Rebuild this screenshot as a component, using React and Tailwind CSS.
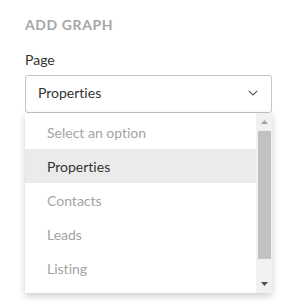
export default function App() {
  const options = [
    { label: 'Select an option', active: false },
    { label: 'Properties', active: true },
    { label: 'Contacts', active: false },
    { label: 'Leads', active: false },
    { label: 'Listing', active: false },
  ]

  return (
    <div className="min-h-[303px] bg-white pl-[25px] pr-[20px] pt-[15px] font-['Lato','Open_Sans',sans-serif] [font-variant-ligatures:none]">
      <h2 className="text-[14px] leading-[20px] font-bold uppercase text-[#a6a6a6] tracking-[0.6px]">Add Graph</h2>

      <label className="block mt-[15px] text-[14px] leading-[20px] text-[#333]">Page</label>

      <div className="relative mt-[5px]">
        <button className="flex h-[38px] w-full items-center justify-between rounded-[3px] border border-[#c4c4c4] bg-white pl-[12px] pr-[13px] text-left">
          <span className="text-[14px] leading-[20px] text-[#333] -mt-[3px]">Properties</span>
          <svg width="10" height="6" viewBox="0 0 10 6" className="-mt-[3px]">
            <path d="M0.8 0.8 L5 5 L9.2 0.8" fill="none" stroke="#555" strokeWidth="1.1" />
          </svg>
        </button>

        <div className="absolute left-0 right-0 top-full flex h-[180px] overflow-hidden bg-white shadow-[0_3px_7px_rgba(0,0,0,0.2)]">
          <ul className="flex-1 pt-[2px]">
            {options.map((o) => (
              <li
                key={o.label}
                className={
                  o.active
                    ? 'h-[34px] flex items-center pl-[22px] text-[14px] text-[#333] bg-[#ebebeb]'
                    : 'h-[34px] flex items-center pl-[22px] text-[14px] text-[#a3a3a3]'
                }
              >
                {o.label}
              </li>
            ))}
          </ul>

          <div className="flex w-[16px] flex-col items-center bg-[#f1f1f1]">
            <div className="flex h-[18px] items-center justify-center">
              <svg width="7" height="4" viewBox="0 0 7 4">
                <path d="M0 4 L3.5 0 L7 4 Z" fill="#a3a3a3" />
              </svg>
            </div>
            <div className="h-[128px] w-[13px] bg-[#c1c1c1]" />
            <div className="flex flex-1 items-end justify-center pb-[7px]">
              <svg width="7" height="4" viewBox="0 0 7 4">
                <path d="M0 0 L7 0 L3.5 4 Z" fill="#505050" />
              </svg>
            </div>
          </div>
        </div>
      </div>
    </div>
  )
}
